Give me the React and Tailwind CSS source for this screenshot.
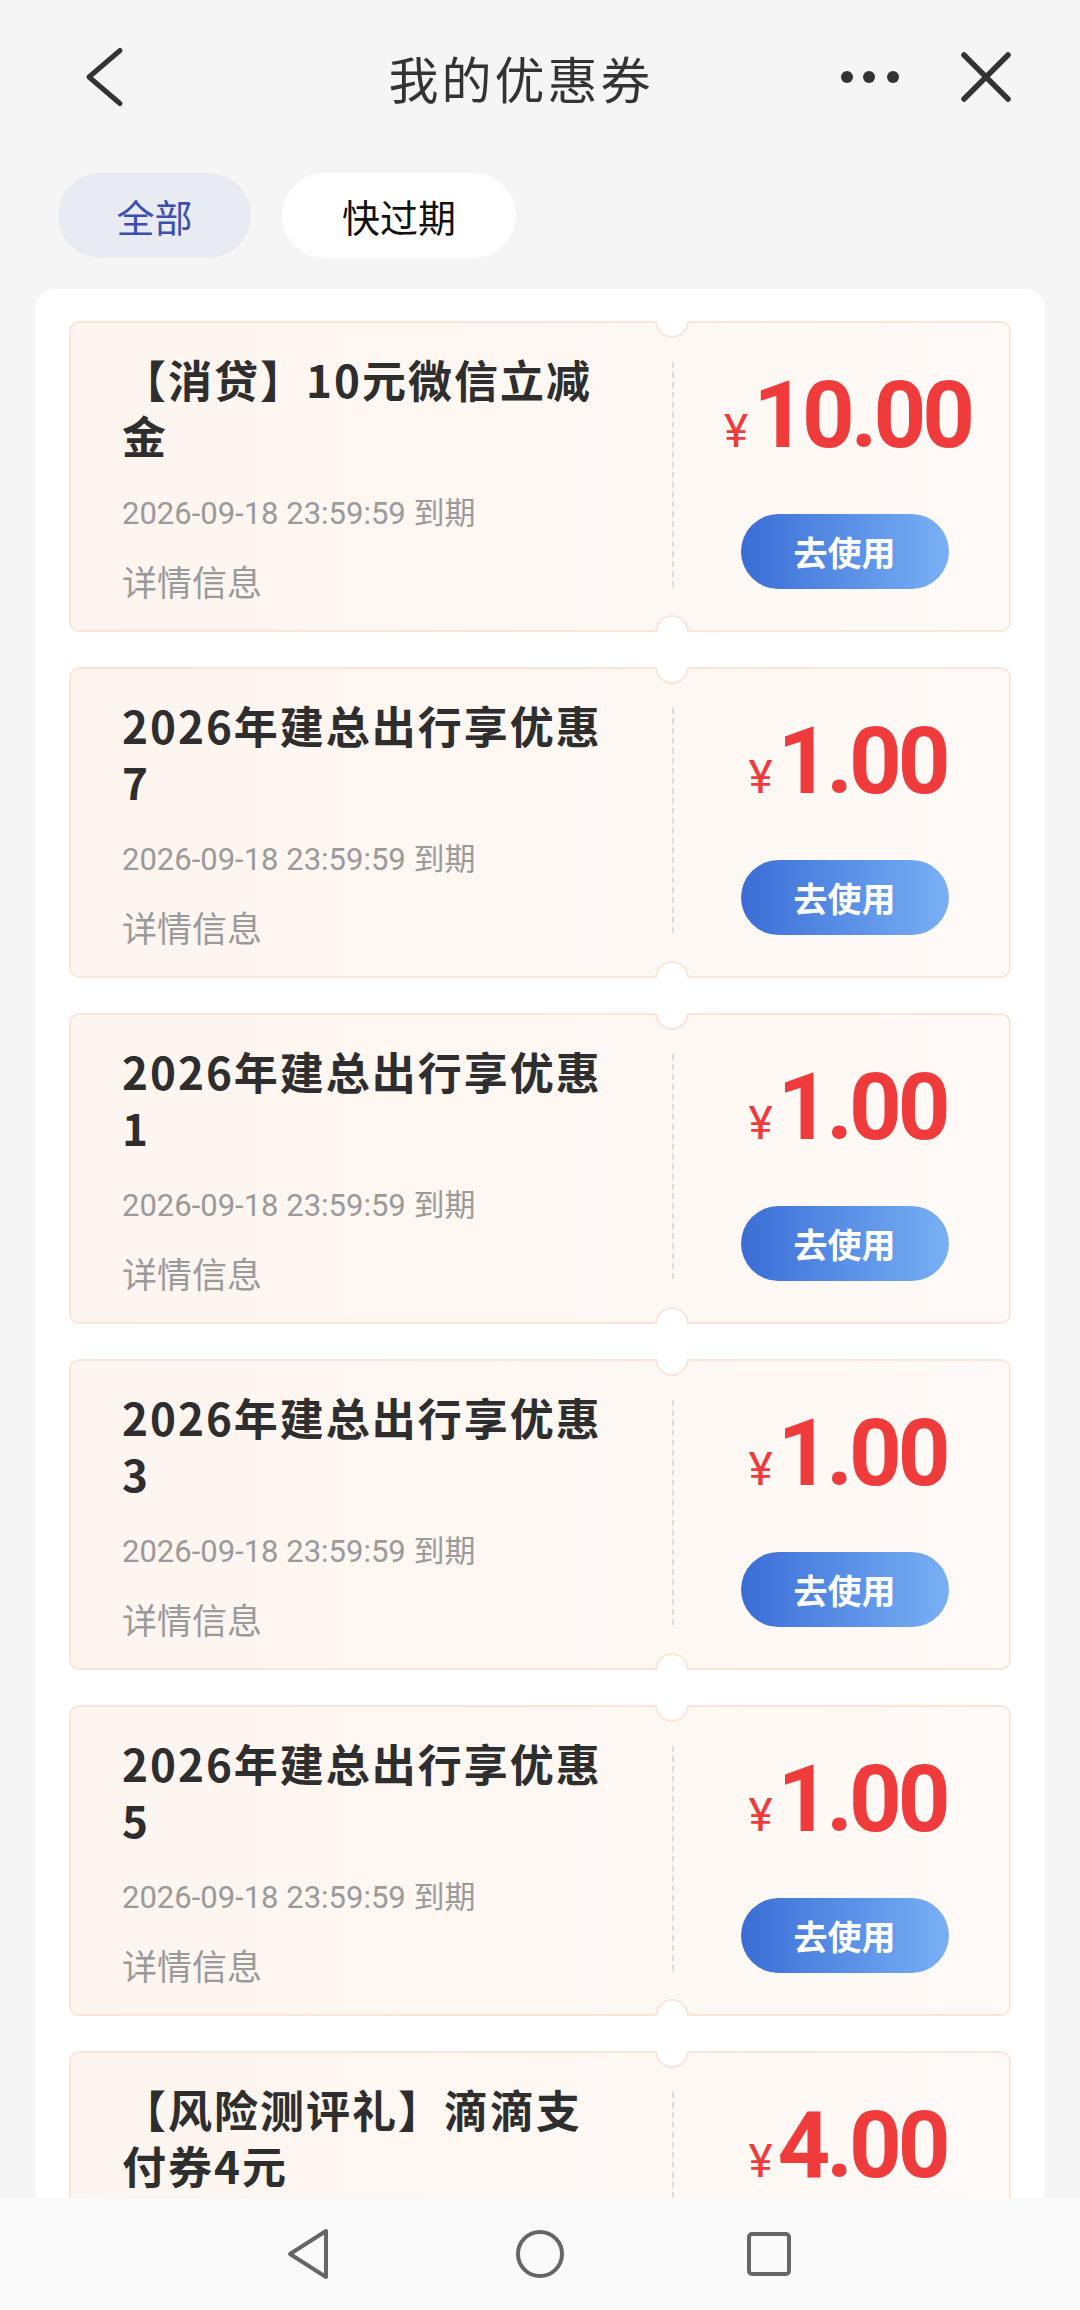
const coupons = [
  { id: 1, title: ['【消贷】10元微信立减', '金'], amount: '10.00' },
  { id: 2, title: ['2026年建总出行享优惠', '7'], amount: '1.00' },
  { id: 3, title: ['2026年建总出行享优惠', '1'], amount: '1.00' },
  { id: 4, title: ['2026年建总出行享优惠', '3'], amount: '1.00' },
  { id: 5, title: ['2026年建总出行享优惠', '5'], amount: '1.00' },
  { id: 6, title: ['【风险测评礼】滴滴支', '付券4元'], amount: '4.00' },
]

const cjk = { fontFamily: '"Noto Sans CJK SC", sans-serif' }
const mixed = { fontFamily: 'Roboto, "Noto Sans CJK SC", sans-serif' }

function Header() {
  return (
    <div className="flex items-center h-[154px] shrink-0">
      <div className="w-[212px] flex items-center">
        <svg className="ml-[84px]" width="42" height="62" viewBox="0 0 42 62" fill="none">
          <polyline points="36,4.5 5,31 36,57.5" stroke="#333" strokeWidth="5" strokeLinecap="round" strokeLinejoin="round" />
        </svg>
      </div>
      <div className="flex-1 text-center text-[50px] tracking-[3px] text-[#333]" style={cjk}>
        我的优惠券
      </div>
      <div className="w-[250px] flex items-center">
        <svg className="ml-[11px]" width="62" height="14" viewBox="0 0 62 14">
          <circle cx="6" cy="7" r="6" fill="#333" />
          <circle cx="28" cy="7" r="6" fill="#333" />
          <circle cx="52" cy="7" r="6" fill="#333" />
        </svg>
        <svg className="ml-[57px]" width="52" height="52" viewBox="0 0 52 52" fill="none">
          <path d="M4 4 L48 48 M48 4 L4 48" stroke="#333" strokeWidth="5.5" strokeLinecap="round" />
        </svg>
      </div>
    </div>
  )
}

function Tabs() {
  return (
    <div className="flex items-center gap-[31px] pl-[58px] mt-[19px] shrink-0" style={cjk}>
      <div className="w-[193px] h-[85px] rounded-full bg-[#e9ebf3] flex items-center justify-center text-[38px] text-[#3a4fae]">
        全部
      </div>
      <div className="w-[234px] h-[85px] rounded-full bg-white flex items-center justify-center text-[38px] text-[#111]">
        快过期
      </div>
    </div>
  )
}

function Coupon({ coupon }) {
  return (
    <div className="relative h-[311px] shrink-0 rounded-[10px] border-2 border-[#fae6d9] bg-gradient-to-r from-[#fdf5ef] to-[#fffaf7] flex">
      {/* notches */}
      <div className="absolute top-[-19px] left-[584px] w-[34px] h-[34px] rounded-full bg-white border-2 border-t-transparent border-l-transparent border-r-[#fae6d9] border-b-[#fae6d9] rotate-45" />
      <div className="absolute bottom-[-19px] left-[584px] w-[34px] h-[34px] rounded-full bg-white border-2 border-b-transparent border-r-transparent border-l-[#fae6d9] border-t-[#fae6d9] rotate-45" />

      <div className="w-[601px] pl-[51px] pt-[28px] flex flex-col">
        <div className="text-[44px] leading-[56px] font-bold tracking-[2px] text-[#2e2e2e]" style={cjk}>
          {coupon.title.map((line, i) => (
            <div key={i} className="whitespace-nowrap">{line}</div>
          ))}
        </div>
        <div className="mt-[31px] text-[31px] leading-[40px] text-[#9a9a9a]" style={mixed}>
          2026-09-18 23:59:59 到期
        </div>
        <div className="mt-[25px] text-[35px] leading-[44px] text-[#9a9a9a]" style={cjk}>
          详情信息
        </div>
      </div>

      <div className="self-start mt-[39px] h-[225px] w-0 border-l-2 border-dashed border-[#e2dcd6]" />

      <div className="flex-1 flex flex-col items-center pl-[12px] pt-[43px]">
        <div className="flex items-baseline h-[100px] leading-[100px] text-[#ef3b3b]" style={mixed}>
          <span className="text-[46px] mr-[5px]">¥</span>
          <span className="text-[92px] font-bold tracking-[-4px]">{coupon.amount}</span>
        </div>
        <button className="mt-[48px] -ml-[6px] w-[208px] h-[75px] rounded-full bg-gradient-to-r from-[#3b6dd6] to-[#79b0f4] text-white text-[34px] font-bold" style={cjk}>
          去使用
        </button>
      </div>
    </div>
  )
}

function NavBar() {
  return (
    <div className="h-[112px] shrink-0 bg-[#fafafa] flex items-center">
      <svg className="ml-[286px]" width="44" height="52" viewBox="0 0 44 52" fill="none">
        <path d="M40 3 L4 26 L40 49 Z" stroke="#666" strokeWidth="4" strokeLinejoin="round" />
      </svg>
      <svg className="ml-[184px]" width="52" height="52" viewBox="0 0 52 52" fill="none">
        <circle cx="26" cy="26" r="22" stroke="#666" strokeWidth="4" />
      </svg>
      <svg className="ml-[179px]" width="48" height="48" viewBox="0 0 48 48" fill="none">
        <rect x="4" y="4" width="40" height="40" rx="3" stroke="#666" strokeWidth="4" />
      </svg>
    </div>
  )
}

export default function App() {
  return (
    <div className="w-[1080px] h-[2310px] flex flex-col bg-[#f5f5f5] overflow-hidden">
      <Header />
      <Tabs />
      <div className="flex-1 min-h-0 overflow-hidden px-[35px] pt-[31px]">
        <div className="bg-white rounded-t-[20px] px-[34px] pt-[32px] pb-[32px] flex flex-col gap-[35px]">
          {coupons.map((c) => (
            <Coupon key={c.id} coupon={c} />
          ))}
        </div>
      </div>
      <NavBar />
    </div>
  )
}
